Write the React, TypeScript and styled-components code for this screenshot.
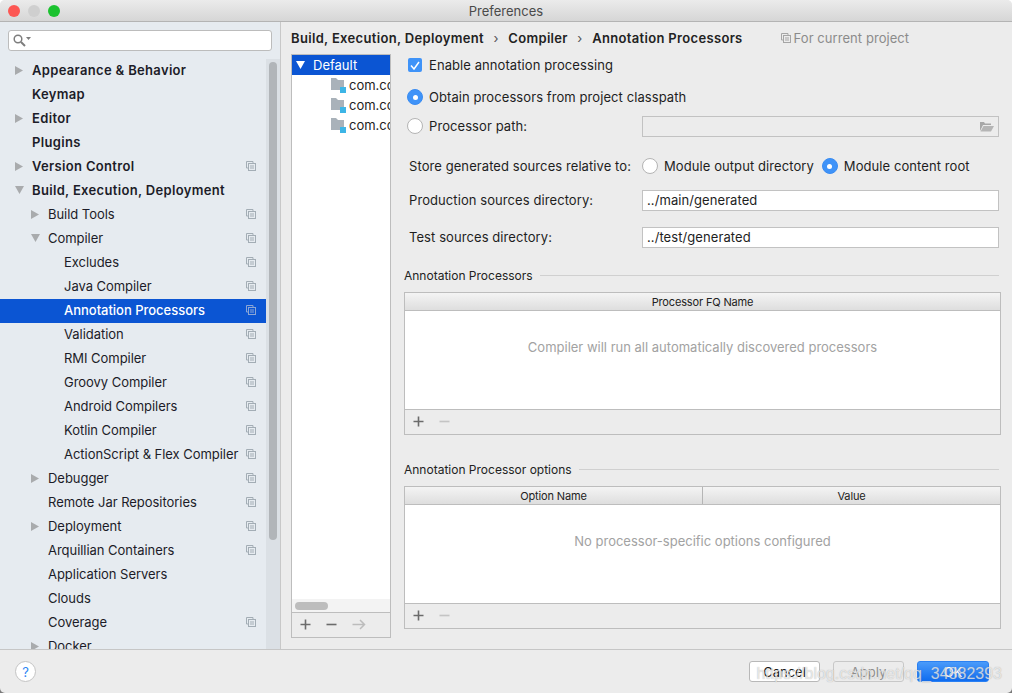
import React from 'react'
import styled, { createGlobalStyle } from 'styled-components'

const GlobalStyle = createGlobalStyle`
    html, body {
        margin: 0;
        padding: 0;
        background: linear-gradient(#fff 50%, #7a7a7a 50%);
    }
    body {
        font-family: Inter, "Liberation Sans", sans-serif;
        font-size: 13px;
        color: #1e1e1e;
    }
`

const Window = styled.div`
    position: relative;
    width: 1012px;
    height: 693px;
    display: flex;
    flex-direction: column;
    overflow: hidden;
    background: #ececec;
    border-radius: 5px;
`

const TitleBar = styled.div`
    height: 21px;
    flex: none;
    display: flex;
    align-items: center;
    position: relative;
    justify-content: center;
    background: linear-gradient(#ebebeb, #d6d6d6);
    border-bottom: 1px solid #b4b4b4;
    color: #4a4a4a;
`

const Lights = styled.div`
    position: absolute;
    left: 8px;
    top: 5px;
    display: flex;
    gap: 8px;
`

const Light = styled.span<{ $color: string }>`
    width: 12px;
    height: 12px;
    border-radius: 50%;
    background: ${p => p.$color};
`

const Middle = styled.div`
    flex: 1;
    min-height: 0;
    display: flex;
`

const Sidebar = styled.div`
    width: 280px;
    flex: none;
    display: flex;
    flex-direction: column;
    background: #e6ebf0;
    border-right: 1px solid #c8c8c8;
`

const SearchBox = styled.div`
    height: 19px;
    margin: 8px 8px 8px;
    flex: none;
    display: flex;
    align-items: center;
    padding-left: 4px;
    background: #fff;
    border: 1px solid #bcbcbc;
    border-radius: 3px;
    box-sizing: content-box;
    width: 258px;
`

const ListArea = styled.div`
    flex: 1;
    min-height: 0;
    display: flex;
`

const List = styled.div`
    flex: 1;
    overflow: hidden;
`

const Row = styled.div<{ $level: number; $selected?: boolean; $bold?: boolean }>`
    height: 24px;
    box-sizing: border-box;
    display: flex;
    align-items: center;
    padding-left: ${p => 15 + p.$level * 16}px;
    padding-right: 10px;
    padding-bottom: 2px;
    background: ${p => (p.$selected ? '#0b55d3' : 'transparent')};
    color: ${p => (p.$selected ? '#fff' : '#1c1c28')};
    font-weight: ${p => (p.$bold ? 600 : p.$selected ? 500 : 400)};
    letter-spacing: ${p => (p.$bold ? '0.33px' : p.$selected ? '-0.02px' : '-0.04px')};
`

const ArrowSlot = styled.span`
    width: 17px;
    flex: none;
    display: flex;
    align-items: center;
`

const RowLabel = styled.span`
    flex: 1;
    white-space: nowrap;
`

const Track = styled.div`
    width: 14px;
    flex: none;
    background: #dbe0e5;
    padding: 3px 3px 0;
    box-sizing: border-box;
`

const Thumb = styled.div`
    height: 478px;
    border-radius: 4px;
    background: #b1b5b9;
`

const Content = styled.div`
    flex: 1;
    min-width: 0;
    display: flex;
    flex-direction: column;
    padding-left: 10px;
`

const Breadcrumb = styled.div`
    height: 32px;
    flex: none;
    display: flex;
    align-items: center;
    font-weight: 600;
    letter-spacing: 0.33px;
    color: #222;
`

const Chevron = styled.span`
    margin: 0 9.5px;
    font-weight: 400;
    color: #555;
`

const ProjectNote = styled.span`
    margin-left: 38px;
    display: flex;
    align-items: center;
    gap: 3px;
    font-weight: 400;
    letter-spacing: 0.06px;
    color: #8b8b8b;
`

const Panes = styled.div`
    flex: 1;
    min-height: 0;
    display: flex;
    padding-bottom: 11px;
`

const TreePane = styled.div`
    width: 100px;
    flex: none;
    display: flex;
    flex-direction: column;
    box-sizing: border-box;
    border: 1px solid #bdbdbd;
`

const TreeBody = styled.div`
    flex: 1;
    background: #fff;
    overflow: hidden;
`

const TreeHead = styled.div`
    height: 20px;
    display: flex;
    align-items: center;
    gap: 8px;
    padding-left: 4px;
    background: #0b55d3;
    color: #fff;
`

const TreeItem = styled.div`
    height: 20px;
    display: flex;
    align-items: center;
    gap: 3px;
    padding-left: 39px;
    white-space: nowrap;
`

const TreeScroll = styled.div`
    height: 13px;
    flex: none;
    background: #f3f3f3;
    padding: 3px 3px 0;
    box-sizing: border-box;
`

const TreeThumb = styled.div`
    width: 33px;
    height: 8px;
    border-radius: 4px;
    background: #bdbdbd;
`

const ToolStrip = styled.div`
    height: 23px;
    padding-bottom: 1px;
    flex: none;
    display: flex;
    align-items: center;
    gap: 15px;
    padding-left: 8px;
    border-top: 1px solid #bdbdbd;
    background: #ececec;
`

const Splitter = styled.div`
    width: 13px;
    flex: none;
    display: flex;
    align-items: center;
    justify-content: flex-start;
    padding-left: 1px;
    box-sizing: border-box;
    padding-bottom: 2px;
`

const Grip = styled.div`
    width: 4px;
    height: 14px;
    background-image: radial-gradient(#a9a9a9 0.6px, transparent 0.7px);
    background-size: 2px 2px;
`

const Form = styled.div`
    flex: 1;
    min-width: 0;
    padding-right: 11px;
    letter-spacing: 0.08px;
`

const OptionRow = styled.div<{ $top: number; $gap?: number }>`
    height: 22px;
    margin-top: ${p => p.$top}px;
    padding-left: 3px;
    display: flex;
    align-items: center;
    gap: ${p => p.$gap ?? 6}px;
`

const FieldRow = styled.div<{ $top: number; $inset?: number }>`
    margin-top: ${p => p.$top}px;
    padding-left: ${p => p.$inset ?? 5}px;
    display: grid;
    grid-template-columns: ${p => 238 - (p.$inset ?? 5)}px 357px;
    align-items: start;
    line-height: 20px;
    min-height: 21px;
`

const RadioLabel = styled.div`
    display: flex;
    align-items: center;
    gap: 6px;
`

const RadioPair = styled.div`
    display: flex;
    align-items: center;
    gap: 8px;
    white-space: nowrap;
`

const Radio = styled.span<{ $on?: boolean }>`
    width: 16px;
    height: 16px;
    flex: none;
    box-sizing: border-box;
    border-radius: 50%;
    display: flex;
    align-items: center;
    justify-content: center;
    background: ${p => (p.$on ? '#3f93f8' : '#fff')};
    border: 1px solid ${p => (p.$on ? '#3a8cf2' : '#b4b4b4')};
    &::after {
        content: '';
        width: 5px;
        height: 5px;
        border-radius: 50%;
        background: ${p => (p.$on ? '#fff' : 'transparent')};
    }
`

const Check = styled.span`
    width: 14px;
    height: 14px;
    margin-left: 1px;
    flex: none;
    border-radius: 2px;
    background: #3f93f8;
    display: flex;
    align-items: center;
    justify-content: center;
`

const Input = styled.div<{ $disabled?: boolean }>`
    height: 21px;
    box-sizing: border-box;
    display: flex;
    align-items: center;
    justify-content: space-between;
    padding: 0 4px;
    line-height: 19px;
    background: ${p => (p.$disabled ? '#ececec' : '#fff')};
    border: 1px solid #c2c2c2;
`

const SectionTitle = styled.div<{ $top: number }>`
    height: 16px;
    margin-top: ${p => p.$top}px;
    display: flex;
    align-items: center;
    gap: 7px;
    font-size: 12px;
    letter-spacing: 0;
    color: #222;
    &::after {
        content: '';
        flex: 1;
        height: 1px;
        margin-right: 2px;
        background: #d0d0d0;
    }
`

const TableBox = styled.div`
    height: 143px;
    margin-top: 9px;
    display: flex;
    flex-direction: column;
    box-sizing: border-box;
    border: 1px solid #bdbdbd;
`

const TableHead = styled.div`
    height: 17px;
    flex: none;
    display: flex;
    background: linear-gradient(#f4f4f4, #dedede);
    border-bottom: 1px solid #bdbdbd;
    font-size: 11px;
    letter-spacing: -0.15px;
    color: #222;
`

const HeadCell = styled.div`
    flex: 1;
    display: flex;
    align-items: center;
    justify-content: center;
    & + & {
        border-left: 1px solid #b5b5b5;
    }
`

const TableBody = styled.div`
    flex: 1;
    display: flex;
    align-items: center;
    justify-content: center;
    padding-bottom: 27px;
    background: #fff;
    letter-spacing: 0;
    color: #a2a2a2;
`

const Footer = styled.div`
    height: 44px;
    flex: none;
    display: flex;
    align-items: center;
    justify-content: space-between;
    padding: 0 23px 0 15px;
    border-top: 1px solid #c6c6c6;
    box-sizing: border-box;
`

const HelpButton = styled.div`
    width: 21px;
    height: 21px;
    box-sizing: border-box;
    border-radius: 50%;
    display: flex;
    align-items: center;
    justify-content: center;
    background: #fff;
    border: 1px solid #c4c4c4;
    color: #2f86f3;
    font-size: 13px;
`

const Buttons = styled.div`
    display: flex;
    gap: 13px;
`

const Button = styled.div<{ $kind?: 'primary' | 'disabled' }>`
    width: ${p => (p.$kind === 'primary' ? 72 : 71)}px;
    height: 21px;
    box-sizing: border-box;
    border-radius: 3px;
    display: flex;
    align-items: center;
    justify-content: center;
    background: ${p => p.$kind === 'primary'
        ? 'linear-gradient(#4a9bfa, #0f6cf0)'
        : p.$kind === 'disabled' ? '#ececec' : '#fff'};
    border: 1px solid ${p => p.$kind === 'primary' ? '#2a80f2' : p.$kind === 'disabled' ? '#c8c8c8' : '#b8b8b8'};
    color: ${p => p.$kind === 'primary' ? '#fff' : p.$kind === 'disabled' ? '#8f8f8f' : '#1a1a1a'};
`

const Watermark = styled.div`
    position: absolute;
    right: 10px;
    bottom: 10px;
    font-family: "Liberation Sans", sans-serif;
    font-size: 16px;
    color: rgba(255, 255, 255, 0.66);
    text-shadow: 0 0 1px rgba(120, 120, 120, 0.6);
    white-space: nowrap;
`

const RightArrow = () => (
    <svg width="8" height="9" viewBox="0 0 8 9"><path d="M0 0 L8 4.5 L0 9 Z" fill="#a9abad" /></svg>
)

const DownArrow = ({ color = '#a9abad' }: { color?: string }) => (
    <svg width="9" height="8" viewBox="0 0 9 8"><path d="M0 0 H9 L4.5 8 Z" fill={color} /></svg>
)

const CopyIcon = ({ color = '#a3adb5' }: { color?: string }) => (
    <svg width="10" height="10" viewBox="0 0 10 10" fill="none" stroke={color} strokeWidth="1">
        <path d="M7 2.5 V0.5 H0.5 V7 H2.5" />
        <rect x="2.5" y="2.5" width="7" height="7" />
        <path d="M4 5 H8 M4 7 H8" />
    </svg>
)

const SearchIcon = () => (
    <svg width="19" height="13" viewBox="0 0 19 13" fill="none">
        <circle cx="5" cy="5" r="3.8" stroke="#7d7d7d" strokeWidth="1.5" />
        <path d="M8 8 L12 12" stroke="#7d7d7d" strokeWidth="2" />
        <path d="M13 3 H18 L15.5 6 Z" fill="#7d7d7d" />
    </svg>
)

const PackageIcon = () => (
    <svg width="15" height="15" viewBox="0 0 15 15" style={{ flex: 'none' }}>
        <path d="M0 0 H5 L7 2 H13 V10 H9 V12 H0 Z" fill="#a9b2ba" />
        <rect x="9" y="9" width="6" height="6" fill="#3db5e6" />
    </svg>
)

const FolderIcon = () => (
    <svg width="15" height="11" viewBox="0 0 15 11">
        <path d="M1 1 H5 L6 2.5 H12 V4 H4 L1 10 Z" fill="#a7a7a7" />
        <path d="M4.5 5 H15 L12 10.5 H1.5 Z" fill="#b5b5b5" />
    </svg>
)

const Plus = ({ color = '#6b6b6b' }: { color?: string }) => (
    <svg width="11" height="11" viewBox="0 0 11 11"><path d="M5.5 0.5 V10.5 M0.5 5.5 H10.5" stroke={color} strokeWidth="1.6" /></svg>
)

const Minus = ({ color = '#6b6b6b' }: { color?: string }) => (
    <svg width="11" height="11" viewBox="0 0 11 11"><path d="M0.5 5.5 H10.5" stroke={color} strokeWidth="1.6" /></svg>
)

const Forward = () => (
    <svg width="14" height="11" viewBox="0 0 14 11" fill="none"><path d="M0.5 5.5 H12.5 M8 1 L12.5 5.5 L8 10" stroke="#bcbcbc" strokeWidth="1.5" /></svg>
)

type Item = {
    label: string
    level: number
    arrow?: 'right' | 'down'
    bold?: boolean
    copy?: boolean
    selected?: boolean
}

const items: Item[] = [
    { label: 'Appearance & Behavior', level: 0, arrow: 'right', bold: true },
    { label: 'Keymap', level: 0, bold: true },
    { label: 'Editor', level: 0, arrow: 'right', bold: true },
    { label: 'Plugins', level: 0, bold: true },
    { label: 'Version Control', level: 0, arrow: 'right', bold: true, copy: true },
    { label: 'Build, Execution, Deployment', level: 0, arrow: 'down', bold: true },
    { label: 'Build Tools', level: 1, arrow: 'right', copy: true },
    { label: 'Compiler', level: 1, arrow: 'down', copy: true },
    { label: 'Excludes', level: 2, copy: true },
    { label: 'Java Compiler', level: 2, copy: true },
    { label: 'Annotation Processors', level: 2, copy: true, selected: true },
    { label: 'Validation', level: 2, copy: true },
    { label: 'RMI Compiler', level: 2, copy: true },
    { label: 'Groovy Compiler', level: 2, copy: true },
    { label: 'Android Compilers', level: 2, copy: true },
    { label: 'Kotlin Compiler', level: 2, copy: true },
    { label: 'ActionScript & Flex Compiler', level: 2, copy: true },
    { label: 'Debugger', level: 1, arrow: 'right', copy: true },
    { label: 'Remote Jar Repositories', level: 1, copy: true },
    { label: 'Deployment', level: 1, arrow: 'right', copy: true },
    { label: 'Arquillian Containers', level: 1, copy: true },
    { label: 'Application Servers', level: 1 },
    { label: 'Clouds', level: 1 },
    { label: 'Coverage', level: 1, copy: true },
    { label: 'Docker', level: 1, arrow: 'right' },
]

const App = () => {
    return (
        <Window>
            <GlobalStyle />
            <TitleBar>
                <Lights>
                    <Light $color="#fc5753" />
                    <Light $color="#cfcfcf" />
                    <Light $color="#1bc22f" />
                </Lights>
                Preferences
            </TitleBar>
            <Middle>
                <Sidebar>
                    <SearchBox><SearchIcon /></SearchBox>
                    <ListArea>
                        <List>
                            {items.map(item => (
                                <Row key={item.label} $level={item.level} $bold={item.bold} $selected={item.selected}>
                                    <ArrowSlot>
                                        {item.arrow === 'right' && <RightArrow />}
                                        {item.arrow === 'down' && <DownArrow />}
                                    </ArrowSlot>
                                    <RowLabel>{item.label}</RowLabel>
                                    {item.copy && <CopyIcon color={item.selected ? '#8ba6d6' : undefined} />}
                                </Row>
                            ))}
                        </List>
                        <Track><Thumb /></Track>
                    </ListArea>
                </Sidebar>
                <Content>
                    <Breadcrumb>
                        Build, Execution, Deployment
                        <Chevron>›</Chevron>
                        Compiler
                        <Chevron>›</Chevron>
                        Annotation Processors
                        <ProjectNote><CopyIcon color="#a5a5a5" />For current project</ProjectNote>
                    </Breadcrumb>
                    <Panes>
                        <TreePane>
                            <TreeBody>
                                <TreeHead><DownArrow color="#fff" />Default</TreeHead>
                                <TreeItem><PackageIcon />com.compiler.processor</TreeItem>
                                <TreeItem><PackageIcon />com.compiler.processor</TreeItem>
                                <TreeItem><PackageIcon />com.compiler.processor</TreeItem>
                            </TreeBody>
                            <TreeScroll><TreeThumb /></TreeScroll>
                            <ToolStrip><Plus /><Minus /><Forward /></ToolStrip>
                        </TreePane>
                        <Splitter><Grip /></Splitter>
                        <Form>
                            <OptionRow $top={0} $gap={7}>
                                <Check>
                                    <svg width="10" height="9" viewBox="0 0 10 9" fill="none"><path d="M1 4.5 L4 8 L9 1" stroke="#fff" strokeWidth="1.5" /></svg>
                                </Check>
                                Enable annotation processing
                            </OptionRow>
                            <OptionRow $top={10}><Radio $on />Obtain processors from project classpath</OptionRow>
                            <FieldRow $top={8} $inset={3}>
                                <RadioLabel><Radio />Processor path:</RadioLabel>
                                <Input $disabled><span /><FolderIcon /></Input>
                            </FieldRow>
                            <FieldRow $top={19}>
                                Store generated sources relative to:
                                <RadioPair>
                                    <RadioLabel><Radio />Module output directory</RadioLabel>
                                    <RadioLabel><Radio $on />Module content root</RadioLabel>
                                </RadioPair>
                            </FieldRow>
                            <FieldRow $top={13}>
                                Production sources directory:
                                <Input>../main/generated</Input>
                            </FieldRow>
                            <FieldRow $top={16}>
                                Test sources directory:
                                <Input>../test/generated</Input>
                            </FieldRow>
                            <SectionTitle $top={19}>Annotation Processors</SectionTitle>
                            <TableBox>
                                <TableHead><HeadCell>Processor FQ Name</HeadCell></TableHead>
                                <TableBody>Compiler will run all automatically discovered processors</TableBody>
                                <ToolStrip><Plus /><Minus color="#c4c4c4" /></ToolStrip>
                            </TableBox>
                            <SectionTitle $top={26}>Annotation Processor options</SectionTitle>
                            <TableBox>
                                <TableHead><HeadCell>Option Name</HeadCell><HeadCell>Value</HeadCell></TableHead>
                                <TableBody>No processor-specific options configured</TableBody>
                                <ToolStrip><Plus /><Minus color="#c4c4c4" /></ToolStrip>
                            </TableBox>
                        </Form>
                    </Panes>
                </Content>
            </Middle>
            <Footer>
                <HelpButton>?</HelpButton>
                <Buttons>
                    <Button>Cancel</Button>
                    <Button $kind="disabled">Apply</Button>
                    <Button $kind="primary">OK</Button>
                </Buttons>
            </Footer>
            <Watermark>https://blog.csdn.net/qq_34882393</Watermark>
        </Window>
    )
}

export default App
